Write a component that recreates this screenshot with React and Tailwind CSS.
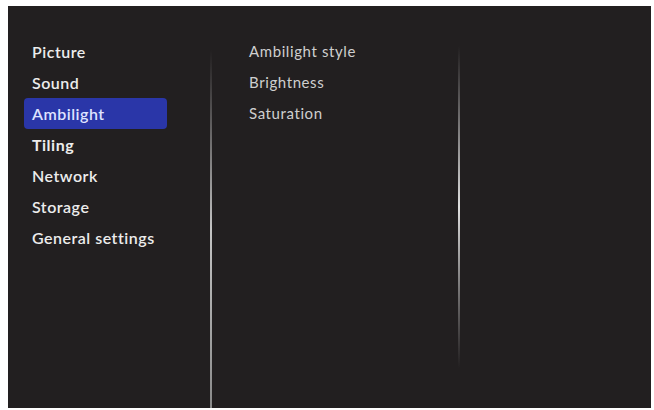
import React from 'react'

const menu = [
  { label: 'Picture' },
  { label: 'Sound' },
  { label: 'Ambilight', active: true },
  { label: 'Tiling', bold: true },
  { label: 'Network' },
  { label: 'Storage' },
  { label: 'General settings' },
]

const sub = ['Ambilight style', 'Brightness', 'Saturation']

const App = () => {
  return (
    <div className="h-[410px] w-[654px] bg-white pl-[8px] pt-[6px]" style={{ fontFamily: 'Lato, "Open Sans", sans-serif' }}>
      <div className="flex h-[402px] w-[643px] bg-[#221f20]">

        <div className="w-[202px] pl-[16px] pt-[30px]">
          {menu.map((m) => (
            <div
              key={m.label}
              className={`flex h-[31px] w-[143px] items-center rounded-[4px] px-[8px] text-[16px] tracking-[0.5px] ${m.active ? 'bg-[#2a36a8] text-[#dfe3ff]' : 'text-[#ececec]'} ${m.bold ? 'font-bold' : 'font-semibold'}`}
            >
              {m.label}
            </div>
          ))}
        </div>

        <div className="mt-[44px] h-[358px] w-[2px] bg-gradient-to-b from-[#221f20] via-[#c4c4c4] to-[#8a8a8a]" />

        <div className="w-[246px] pl-[37px] pt-[30px]">
          {sub.map((s) => (
            <div key={s} className="flex h-[31px] items-center text-[15px] tracking-[0.6px] text-[#cfcfcf]">
              {s}
            </div>
          ))}
        </div>

        <div className="mt-[40px] h-[322px] w-[2px] bg-gradient-to-b from-[#221f20] via-[#e0e0e0] to-[#221f20]" />

        <div className="flex-1" />
      </div>
    </div>
  )
}

export default App
